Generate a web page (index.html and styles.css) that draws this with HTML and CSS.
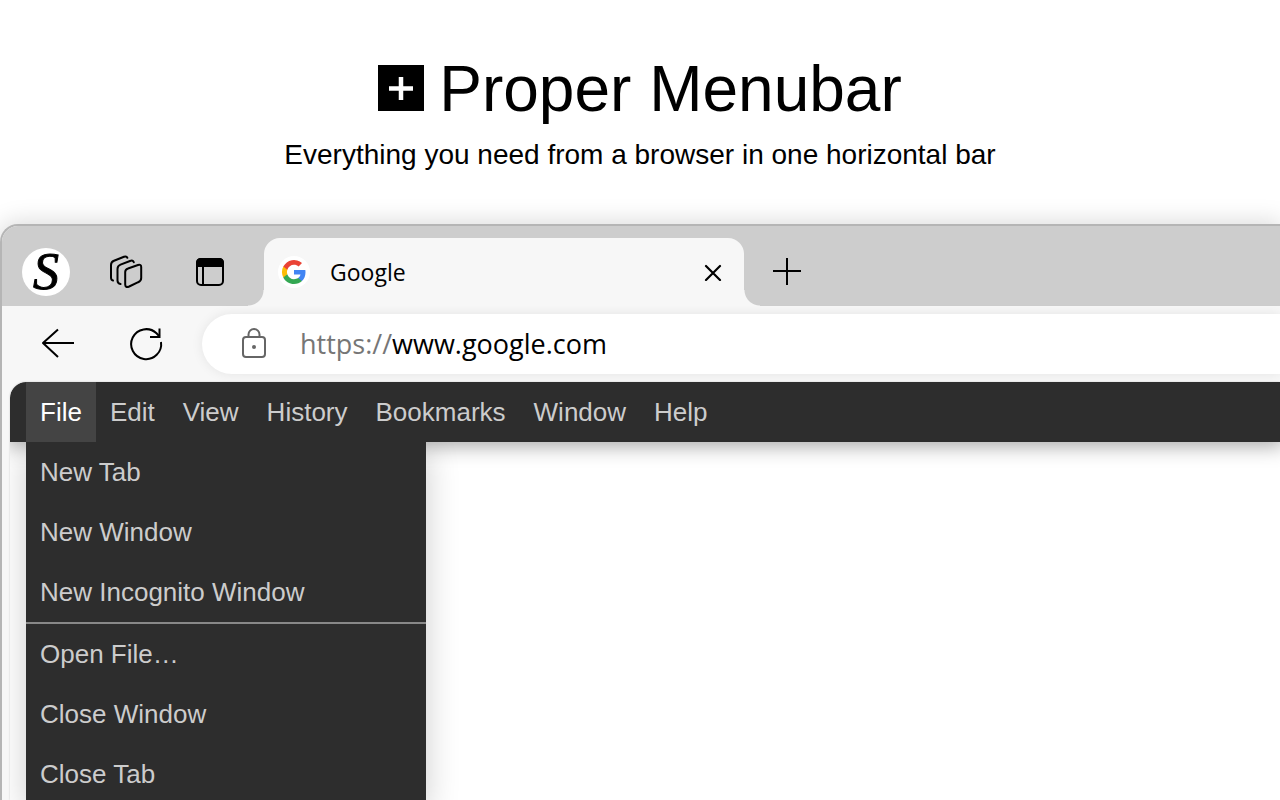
FILE: index.html
```html
<!DOCTYPE html>
<html lang="en">
<head>
<meta charset="utf-8">
<title>Proper Menubar</title>
<link rel="stylesheet" href="styles.css">
</head>
<body>
<header class="hero">
  <h1 class="title">
    <svg class="logo" viewBox="0 0 46 46" aria-hidden="true"><path d="M0 0h46v46H0z"/><path d="M23 12v23M11 23.500h24" stroke="#fff" stroke-width="4.500"/></svg>
    Proper Menubar
  </h1>
  <p class="subtitle">Everything you need from a browser in one horizontal bar</p>
</header>
<main class="window">
  <div class="tabstrip">
    <div class="tools">
      <button class="avatar" aria-label="Profile">S</button>
      <button class="tool" aria-label="Workspaces"><svg width="36" height="36" viewBox="0 0 36 36" fill="none" stroke="#000" stroke-width="2" stroke-linecap="round" stroke-linejoin="round"><path d="M20 14.500 30 11Q33.200 10 33.200 13v11q0 3-3 4.200l-9 4.300q-4 1.500-4-2V18q0-2.600 2.800-3.500z"/><path d="M12.500 30q-3-.5-3-3.500V15q0-3.200 3-4.400L22 7q3-1.200 3.800 1.200"/><path d="M5 26.500q-2-.3-2-3V11q0-3 3-4.200l10-4q2.600-1 3.400 1"/></svg></button>
      <button class="tool" aria-label="Tab actions"><svg width="36" height="36" viewBox="0 0 36 36" fill="none" stroke="#000" stroke-width="2"><rect x="5" y="5" width="26" height="26" rx="4"/><path d="M5 12V9q0-4 4-4h18q4 0 4 4v3z" fill="#000"/><path d="M11 12v19"/></svg></button>
    </div>
    <div class="tab">
      <svg class="favicon" viewBox="0 0 32 32" aria-hidden="true"><circle cx="16" cy="16" r="16" fill="#fff"/><g transform="translate(4 4)"><path fill="#4285f4" d="M23.500 12.300c0-.800-.100-1.600-.200-2.300H12v4.500h6.500c-.300 1.500-1.100 2.700-2.400 3.600v3H20c2.300-2.100 3.500-5.200 3.500-8.800z"/><path fill="#34a853" d="M12 24c3.200 0 6-1.100 8-2.900l-3.900-3c-1.100.700-2.500 1.200-4.100 1.200-3.100 0-5.800-2.100-6.700-5H1.300v3.100C3.300 21.300 7.300 24 12 24z"/><path fill="#fbbc05" d="M5.300 14.300a7 7 0 0 1 0-4.600V6.600h-4a12 12 0 0 0 0 10.800z"/><path fill="#ea4335" d="M12 4.700c1.800 0 3.400.600 4.600 1.800L20 3.100A12 12 0 0 0 1.300 6.600l4 3.100c.900-2.900 3.600-5 6.700-5z"/></g></svg>
      <span class="tab-name">Google</span>
      <button class="close" aria-label="Close tab"><svg width="18" height="18" viewBox="0 0 18 18" stroke="#000" stroke-width="2.200" stroke-linecap="round"><path d="m2 3 14 14M16 3 2 17"/></svg></button>
    </div>
    <button class="add" aria-label="New tab"><svg width="28" height="28" viewBox="0 0 28 28" stroke="#000" stroke-width="2"><path d="M14 0v27M0 13h28"/></svg></button>
  </div>
  <div class="toolbar">
    <button class="nav" aria-label="Back"><svg width="36" height="36" viewBox="0 0 36 36" fill="none" stroke="#000" stroke-width="2" stroke-linejoin="round"><path d="M34 17H3M18 3.500 3 17l15 14"/></svg></button>
    <button class="nav" aria-label="Reload"><svg width="36" height="36" viewBox="0 0 36 36" fill="none" stroke="#000" stroke-width="2"><path d="M33 16a15 15 0 1 1-4.500-8.700L31.500 10.500"/><path d="M31.500 2.500V11H22"/></svg></button>
    <div class="address">
      <svg class="lock" width="28" height="32" viewBox="0 0 28 32" fill="none" stroke="#666" stroke-width="2"><rect x="3" y="9" width="22" height="20" rx="3"/><path d="M8.500 9V6.500a5.500 5.500 0 0 1 11 0V9"/><circle cx="14" cy="19" r="2" fill="#666" stroke="none"/></svg>
      <label class="scheme" for="url">https://</label><input class="url" id="url" type="text" value="www.google.com" spellcheck="false">
    </div>
  </div>
  <div class="page">
    <nav class="menubar">
      <div class="menu">
        <button class="menu-title active" aria-expanded="true">File</button>
        <div class="dropdown">
          <button class="item">New Tab</button>
          <button class="item">New Window</button>
          <button class="item">New Incognito Window</button>
          <hr class="separator">
          <button class="item">Open File…</button>
          <button class="item">Close Window</button>
          <button class="item">Close Tab</button>
        </div>
      </div>
      <button class="menu-title">Edit</button>
      <button class="menu-title">View</button>
      <button class="menu-title">History</button>
      <button class="menu-title">Bookmarks</button>
      <button class="menu-title">Window</button>
      <button class="menu-title">Help</button>
    </nav>
  </div>
</main>
</body>
</html>
```
FILE: styles.css
```css
* { box-sizing: border-box; }

body {
  margin: 0;
  height: 100vh;
  display: flex;
  flex-direction: column;
  overflow: hidden;
  background: #fff;
  color: #000;
  font-family: "Liberation Sans", Arial, sans-serif;
}

button {
  margin: 0;
  padding: 0;
  border: 0;
  background: none;
  color: inherit;
  font: inherit;
}

svg { display: block; flex: none; }

.hero {
  display: flex;
  flex-direction: column;
  align-items: center;
  gap: 18px;
  padding: 57px 16px 53px;
}

.title {
  display: flex;
  align-items: center;
  gap: 15px;
  margin: 0;
  font-size: 64px;
  line-height: 64px;
  font-weight: 400;
}

.logo { width: 46px; height: 46px; margin-bottom: 2px; }

.subtitle { margin: 0; font-size: 28px; line-height: 32px; }

.window {
  flex: 1;
  display: flex;
  flex-direction: column;
  border: 2px solid #b5b5b5;
  border-width: 2px 0 0 2px;
  border-top-left-radius: 18px;
  background: #f7f7f7;
  box-shadow: 0 0 24px 2px rgba(0, 0, 0, 0.15);
}

.tabstrip {
  display: flex;
  align-items: flex-end;
  height: 80px;
  background: #cdcdcd;
  border-top-left-radius: 16px;
}

.tools {
  display: flex;
  align-items: center;
  gap: 32px;
  width: 262px;
  height: 68px;
  padding-left: 20px;
}

.avatar {
  width: 48px;
  height: 48px;
  margin-right: 6px;
  border-radius: 50%;
  background: #fff;
  font: italic 52px/48px "Liberation Serif", serif;
  -webkit-text-stroke: 1px #000;
}

.tool { margin-right: 16px; }

.tab {
  position: relative;
  display: flex;
  align-items: center;
  width: 480px;
  height: 68px;
  padding: 0 22px 0 14px;
  border-radius: 16px 16px 0 0;
  background: #f7f7f7;
}

.tab::before,
.tab::after {
  content: "";
  position: absolute;
  bottom: 0;
  width: 16px;
  height: 16px;
}

.tab::before {
  right: 100%;
  background: radial-gradient(circle at 0 0, transparent 15px, #f7f7f7 16px);
}

.tab::after {
  left: 100%;
  background: radial-gradient(circle at 100% 0, transparent 15px, #f7f7f7 16px);
}

.favicon { width: 32px; height: 32px; }

.tab-name {
  flex: 1;
  padding-left: 20px;
  font: 23px/32px "Open Sans", "Noto Sans", sans-serif;
}

.add { height: 68px; padding: 0 29px; }

.toolbar {
  display: flex;
  align-items: center;
  height: 76px;
  padding-left: 38px;
}

.nav { width: 36px; margin-right: 52px; }

.nav + .nav { margin-right: 38px; }

.address {
  flex: 1;
  display: flex;
  align-items: center;
  height: 60px;
  padding-left: 38px;
  border-radius: 30px 0 0 30px;
  background: #fff;
  box-shadow: 0 0 12px rgba(0, 0, 0, 0.08);
  font: 27px/36px "Open Sans", "Noto Sans", sans-serif;
}

.lock { margin-right: 32px; }

.scheme { color: #767676; }

.url {
  flex: 1;
  min-width: 0;
  padding: 0;
  border: 0;
  outline: 0;
  background: none;
  color: #000;
  font: inherit;
}

.page {
  flex: 1;
  margin-left: 8px;
  border-top-left-radius: 16px;
  background: #fff;
  box-shadow: 0 0 2px rgba(0, 0, 0, 0.2);
}

.menubar {
  display: flex;
  padding-left: 16px;
  border-top-left-radius: 16px;
  background: #2d2d2d;
  box-shadow: 0 0 20px 4px rgba(0, 0, 0, 0.35);
  clip-path: inset(0 0 -600px 0 round 16px 0 0 0);
  color: #ccc;
  font-size: 26px;
  line-height: 60px;
}

.menu { position: relative; }

.menu-title { padding: 0 14px; }

.active { background: #444; color: #fff; }

.dropdown {
  position: absolute;
  top: 100%;
  left: 0;
  width: 400px;
  background: #2d2d2d;
  box-shadow: 0 8px 32px rgba(0, 0, 0, 0.2);
  clip-path: inset(0 -60px -60px -16px);
}

.item {
  display: block;
  width: 100%;
  padding: 0 14px;
  text-align: left;
}

.separator { height: 2px; margin: 0; border: 0; background: #888; }
```
